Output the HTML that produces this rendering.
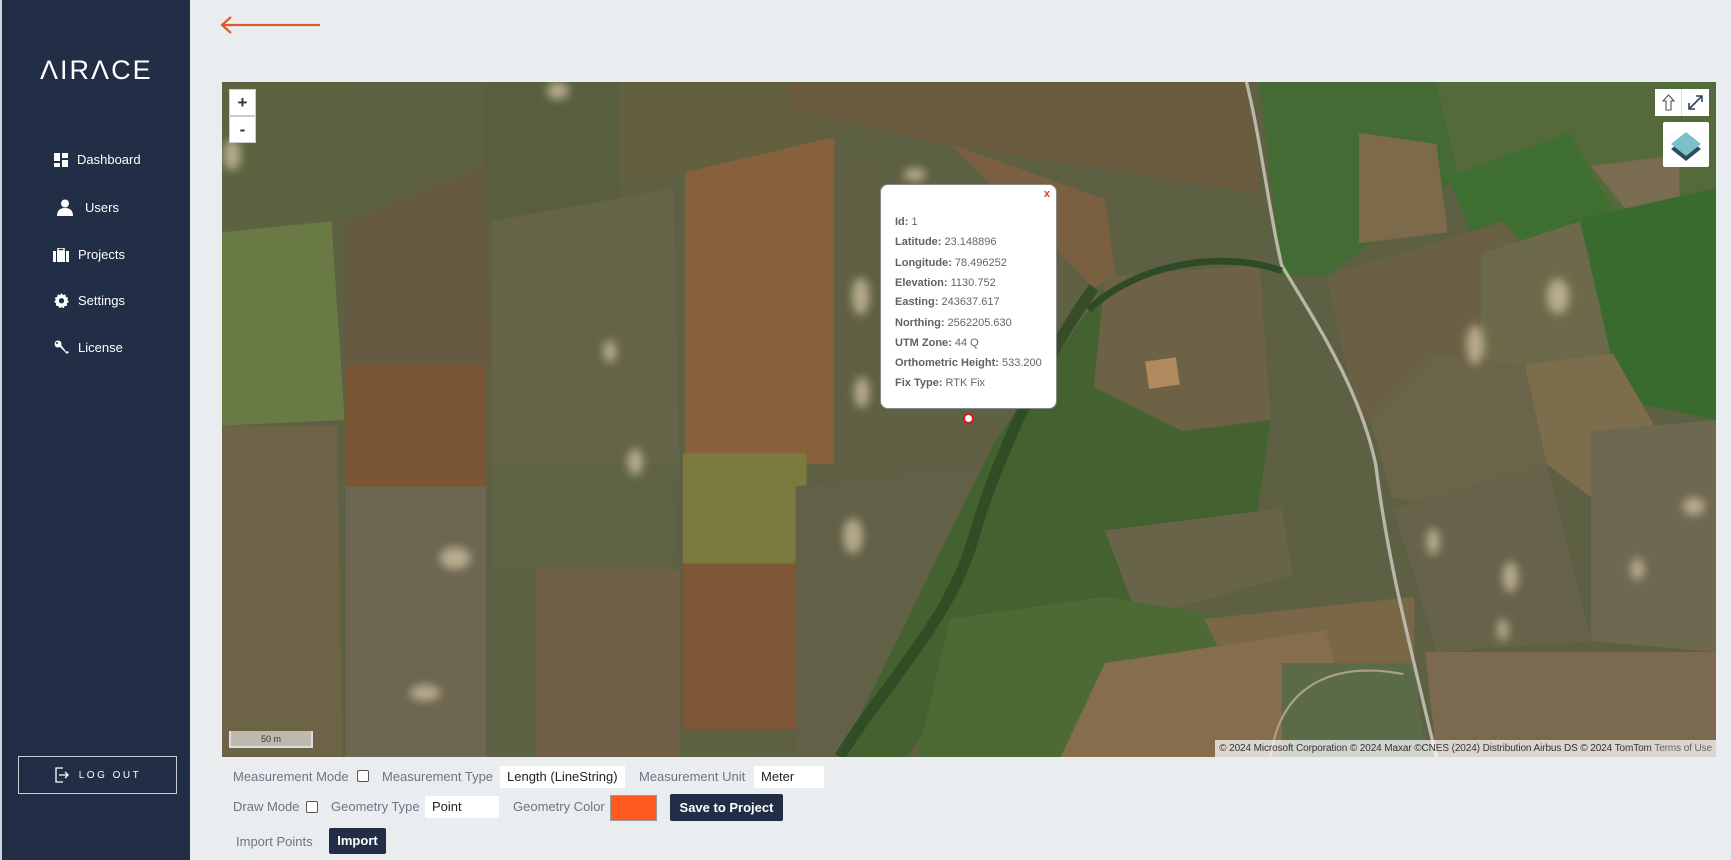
<!DOCTYPE html>
<html><head><meta charset="utf-8">
<style>
*{margin:0;padding:0;box-sizing:border-box}
body{width:1731px;height:860px;background:#eaedf0;font-family:"Liberation Sans",Arial,sans-serif;position:relative;overflow:hidden}
#sb{position:absolute;left:0;top:0;width:190px;height:860px;background:#222d46;border-left:2px solid #d0d4da}
.logo{position:absolute;left:38px;top:55px;color:#fff;font-size:27px;letter-spacing:2px;font-weight:400}
.nav{position:absolute;color:#fff;font-size:13px;display:flex;align-items:center}
.nav svg{margin-right:9px}
.lo{position:absolute;left:16px;top:756px;width:159px;height:38px;border:1.5px solid #c9ccd3;color:#fff;font-size:10px;letter-spacing:2.5px;display:flex;align-items:center;justify-content:center}
#map{position:absolute;left:222px;top:82px;width:1494px;height:675px;overflow:hidden;background:#5d5f42}
#map>svg.bg{position:absolute;left:0;top:0}
.zb{position:absolute;left:7px;width:27px;height:27px;background:#fff;color:#333;font-weight:bold;font-size:17px;text-align:center;line-height:26px;border:1px solid #ccc}
.pop{position:absolute;left:658px;top:102px;width:177px;height:225px;background:#fff;border-radius:8px;border:1px solid #888;font-size:11px;color:#666}
.pop b{color:#5f6165}
.pop div{position:absolute;left:14px}
.lab{position:absolute;font-size:13px;color:#6b7585}
.inp{position:absolute;background:#fff;font-size:13px;color:#222;padding-left:7px;height:22px;line-height:22px}
.cb{position:absolute;width:12px;height:12px;border:1px solid #555;border-radius:2px;background:#fff}
.btn{position:absolute;background:#222d46;color:#fff;font-weight:bold;font-size:13px;text-align:center;border-radius:2px}
</style></head><body>
<div id="sb">
<div class="logo">ΛIRΛCE</div>
<div class="nav" style="left:52px;top:152px"><svg width="14" height="14" viewBox="0 0 14 14"><rect x="0" y="0" width="6" height="8" fill="#fff"/><rect x="8" y="0" width="6" height="5" fill="#fff"/><rect x="8" y="7" width="6" height="7" fill="#fff"/><rect x="0" y="10" width="6" height="4" fill="#fff"/></svg>Dashboard</div>
<div class="nav" style="left:55px;top:199px"><svg width="16" height="17" viewBox="0 0 16 17"><circle cx="8" cy="4.5" r="4" fill="#fff"/><path d="M0 17 Q0 9 8 9 Q16 9 16 17Z" fill="#fff"/></svg><span style="margin-left:3px">Users</span></div>
<div class="nav" style="left:51px;top:247px"><svg width="16" height="14" viewBox="0 0 16 14"><rect x="0" y="3" width="16" height="11" fill="#fff"/><rect x="5" y="0" width="6" height="3" fill="none" stroke="#fff" stroke-width="1.5"/><rect x="3" y="3" width="1" height="11" fill="#222d46"/><rect x="12" y="3" width="1" height="11" fill="#222d46"/></svg>Projects</div>
<div class="nav" style="left:52px;top:293px"><svg width="15" height="15" viewBox="0 0 16 16"><path d="M8 0l1.5 2.2 2.6-.8.4 2.7 2.6.9-1 2.5 1.9 2-2.3 1.4.3 2.7-2.7.2-1 2.5-2.3-1.4-2.3 1.4-1-2.5-2.7-.2.3-2.7L0 9.5l1.9-2-1-2.5 2.6-.9.4-2.7 2.6.8z" fill="#fff"/><circle cx="8" cy="8.3" r="2.8" fill="#222d46"/></svg>Settings</div>
<div class="nav" style="left:52px;top:340px"><svg width="15" height="15" viewBox="0 0 15 15"><circle cx="4" cy="4" r="3.5" fill="#fff"/><path d="M5 6 L13 14 L15 12 L13 11 L12 12 L11 10 L7 5Z" fill="#fff"/><circle cx="3" cy="3" r="1" fill="#222d46"/></svg>License</div>
<div class="lo"><svg width="16" height="16" viewBox="0 0 16 16" style="margin-right:9px"><path d="M9 1H2v14h7" fill="none" stroke="#fff" stroke-width="1.3"/><path d="M5 8h9M11 5l3 3-3 3" fill="none" stroke="#fff" stroke-width="1.3"/></svg>LOG OUT</div>
</div>
<svg style="position:absolute;left:220px;top:15px" width="104" height="20" viewBox="0 0 104 20"><path d="M2 10H100M11 2L2 10L11 18" fill="none" stroke="#e05a2b" stroke-width="2.2"/></svg>

<div id="map">
<svg class="bg" width="1494" height="675" viewBox="201 74 1352 611" preserveAspectRatio="none">
<defs><filter id="bl"><feGaussianBlur stdDeviation="4"/></filter></defs>
<rect x="201" y="74" width="1352" height="611" fill="#5e6043"/>
<polygon points="201,74 330,74 355,190 300,200 201,210" fill="#5b6340"/>
<polygon points="201,210 300,200 312,380 201,385" fill="#6a7a45"/>
<polygon points="201,385 305,385 310,685 201,685" fill="#6d6448"/>
<polygon points="313,200 440,150 445,330 313,340" fill="#665b42"/>
<polygon points="313,330 440,330 440,440 313,440" fill="#7a5634"/>
<polygon points="313,440 440,440 440,685 313,685" fill="#6d6650"/>
<polygon points="440,74 560,74 560,180 440,200" fill="#595e40"/>
<polygon points="445,200 610,170 615,420 445,420" fill="#656448"/>
<polygon points="445,420 615,420 610,515 445,515" fill="#5f6245"/>
<polygon points="485,515 615,515 615,685 485,685" fill="#70604a"/>
<polygon points="620,130 755,125 755,420 620,420" fill="#86613c"/>
<polygon points="618,410 730,410 730,510 618,510" fill="#7b7a3e"/>
<polygon points="618,510 725,510 725,660 618,660" fill="#7d5638"/>
<polygon points="560,74 760,74 750,125 560,170" fill="#62603f"/>
<polygon points="710,74 1130,74 1140,175 850,130 720,100" fill="#6b5c40"/>
<polygon points="760,150 1000,180 990,260 900,420 760,440" fill="#5f6044"/>
<polygon points="720,440 900,420 880,560 760,685 720,685" fill="#626046"/>
<polygon points="860,130 1000,180 1010,250 990,260" fill="#7a6040"/>
<polygon points="900,400 1000,260 1140,240 1150,380 1130,520 1000,560 900,580 820,685 760,685" fill="#43622f"/>
<polygon points="1000,250 1140,240 1150,380 1070,390 990,350" fill="#6e6246"/>
<polygon points="1000,480 1160,460 1170,520 1030,560" fill="#67644a"/>
<polygon points="860,560 1000,540 1120,560 1160,600 1150,685 830,685" fill="#4e6a34"/>
<polygon points="1090,560 1280,540 1280,685 1150,685" fill="#7a6748"/>
<polygon points="1000,600 1200,570 1230,685 960,685" fill="#856d4e"/>
<polygon points="1140,74 1300,74 1320,160 1200,250 1160,250" fill="#446b33"/>
<polygon points="1300,74 1553,74 1553,180 1460,200 1320,160" fill="#556a3a"/>
<polygon points="1230,120 1300,130 1310,210 1230,220" fill="#7d6a4a"/>
<polygon points="1310,160 1420,120 1460,190 1340,230" fill="#3e6e30"/>
<polygon points="1440,150 1520,140 1520,200 1480,200" fill="#7a6c50"/>
<polygon points="1200,250 1360,200 1420,270 1300,400 1230,380" fill="#6a6044"/>
<polygon points="1420,200 1553,170 1553,380 1460,360" fill="#3a6b2e"/>
<polygon points="1340,230 1430,200 1460,330 1380,360 1340,320" fill="#6c6a4a"/>
<polygon points="1240,380 1300,320 1380,330 1400,420 1310,460 1260,450" fill="#6a6448"/>
<polygon points="1380,330 1460,320 1500,390 1440,450 1400,420" fill="#7c6e4c"/>
<polygon points="1260,460 1400,420 1440,580 1300,590 1280,520" fill="#66634a"/>
<polygon points="1440,390 1553,380 1553,590 1440,580" fill="#6e6850"/>
<polygon points="1290,590 1553,590 1553,685 1300,685" fill="#7b6a50"/>
<polygon points="1160,600 1280,600 1290,685 1160,685" fill="#5b6a48"/>
<g fill="#d9c9a8" opacity="0.7" filter="url(#bl)">
<ellipse cx="505" cy="82" rx="10" ry="8"/><ellipse cx="210" cy="140" rx="8" ry="14"/>
<ellipse cx="779" cy="268" rx="8" ry="17"/><ellipse cx="780" cy="355" rx="7" ry="14"/>
<ellipse cx="552" cy="318" rx="6" ry="10"/><ellipse cx="575" cy="418" rx="7" ry="12"/>
<ellipse cx="772" cy="485" rx="9" ry="16"/><ellipse cx="412" cy="505" rx="14" ry="10"/>
<ellipse cx="385" cy="627" rx="14" ry="7"/><ellipse cx="1335" cy="312" rx="8" ry="18"/>
<ellipse cx="1410" cy="268" rx="10" ry="16"/><ellipse cx="1297" cy="490" rx="6" ry="12"/>
<ellipse cx="1367" cy="522" rx="7" ry="14"/><ellipse cx="1482" cy="515" rx="6" ry="10"/>
<ellipse cx="1533" cy="458" rx="10" ry="8"/><ellipse cx="1360" cy="570" rx="5" ry="10"/>
<ellipse cx="828" cy="158" rx="10" ry="6"/>
</g>
<rect x="1038" y="325" width="28" height="25" fill="#b08a5e" transform="rotate(-8 1052 337)"/>
<path d="M1128 74 C1140 120 1150 200 1160 240 C1190 290 1230 350 1245 420 C1255 500 1270 560 1300 685" fill="none" stroke="#b9b8a8" stroke-width="3"/>
<path d="M985 280 C1040 230 1120 230 1160 245" fill="none" stroke="#2e4a26" stroke-width="6"/>
<path d="M990 260 C940 330 900 420 880 490 C860 560 800 620 760 685" fill="none" stroke="#2c4823" stroke-width="10" opacity="0.8"/>
<path d="M1150 685 C1160 610 1220 600 1270 610" fill="none" stroke="#aaa08a" stroke-width="2"/>
</svg>
<div class="zb" style="top:7px">+</div>
<div class="zb" style="top:34px">-</div>
<div style="position:absolute;left:1433px;top:7px;width:27px;height:27px;background:#fff;border-right:1px solid #ddd"><svg width="27" height="27" viewBox="0 0 27 27"><path d="M13.5 6L8 12h3v9h5v-9h3z" fill="none" stroke="#555" stroke-width="1.1"/></svg></div>
<div style="position:absolute;left:1460px;top:7px;width:27px;height:27px;background:#fff"><svg width="27" height="27" viewBox="0 0 27 27"><path d="M7 20L20 7M14 7h6v6M7 14v6h6" fill="none" stroke="#345" stroke-width="1.6"/></svg></div>
<div style="position:absolute;left:1441px;top:40px;width:46px;height:45px;background:#fff;border-radius:2px"><svg width="46" height="45" viewBox="0 0 46 45"><path d="M23 12L38 24L23 36L8 24Z" fill="#2f4a5a" transform="translate(0,3)"/><path d="M23 10L38 22L23 34L8 22Z" fill="#7bbfca"/></svg></div>
<div class="pop">
<div style="right:6px;left:auto;top:3px;color:#e0401a;font-weight:bold;font-size:11px">x</div>
<div style="top:31px"><b>Id:</b> 1</div>
<div style="top:51px"><b>Latitude:</b> 23.148896</div>
<div style="top:72px"><b>Longitude:</b> 78.496252</div>
<div style="top:92px"><b>Elevation:</b> 1130.752</div>
<div style="top:111px"><b>Easting:</b> 243637.617</div>
<div style="top:132px"><b>Northing:</b> 2562205.630</div>
<div style="top:152px"><b>UTM Zone:</b> 44 Q</div>
<div style="top:172px"><b>Orthometric Height:</b> 533.200</div>
<div style="top:192px"><b>Fix Type:</b> RTK Fix</div>
</div>
<div style="position:absolute;left:741px;top:331px;width:11px;height:11px;border-radius:50%;background:#fff;border:2.5px solid #e0141e"></div>
<div style="position:absolute;left:7px;top:649px;width:84px;height:17px;border:2px solid #ddd;border-top:none;background:rgba(255,255,255,0.55);font-size:9px;text-align:center;line-height:16px;color:#333">50 m</div>
<div style="position:absolute;right:0;bottom:0;height:17px;padding:0 4px;background:rgba(255,255,255,0.72);font-size:10px;line-height:17px;color:#333;letter-spacing:-0.1px">© 2024 Microsoft Corporation © 2024 Maxar ©CNES (2024) Distribution Airbus DS © 2024 TomTom <span style="color:#666">Terms of Use</span></div>
</div>

<div class="lab" style="left:233px;top:769px">Measurement Mode</div>
<div class="cb" style="left:357px;top:770px"></div>
<div class="lab" style="left:382px;top:769px">Measurement Type</div>
<div class="inp" style="left:500px;top:766px;width:125px">Length (LineString)</div>
<div class="lab" style="left:639px;top:769px">Measurement Unit</div>
<div class="inp" style="left:754px;top:766px;width:70px">Meter</div>

<div class="lab" style="left:233px;top:799px">Draw Mode</div>
<div class="cb" style="left:306px;top:801px"></div>
<div class="lab" style="left:331px;top:799px">Geometry Type</div>
<div class="inp" style="left:425px;top:796px;width:74px">Point</div>
<div class="lab" style="left:513px;top:799px">Geometry Color</div>
<div style="position:absolute;left:610px;top:795px;width:47px;height:26px;background:#ff5a1f;border:1px solid #999"></div>
<div class="btn" style="left:670px;top:794px;width:113px;height:27px;line-height:27px">Save to Project</div>

<div class="lab" style="left:236px;top:834px">Import Points</div>
<div class="btn" style="left:329px;top:828px;width:57px;height:26px;line-height:26px">Import</div>
</body></html>
